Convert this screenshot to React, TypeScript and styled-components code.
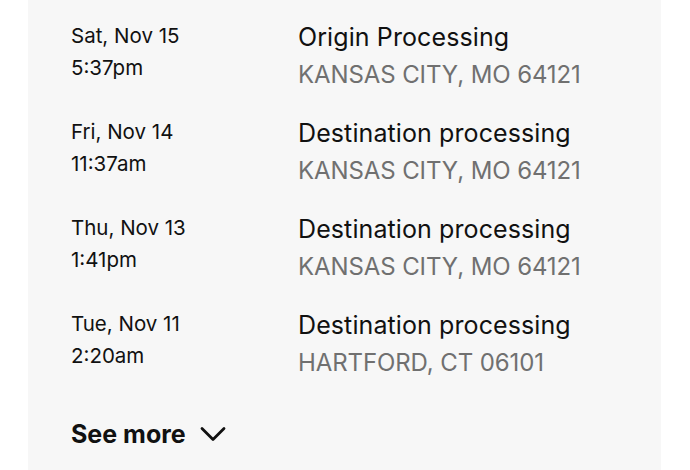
import React from "react";
import styled, { createGlobalStyle } from "styled-components";

const GlobalStyle = createGlobalStyle`
  html, body {
    margin: 0;
    padding: 0;
    background: #fff;
  }
  body {
    font-family: Inter, "Liberation Sans", Arial, sans-serif;
    color: #111;
  }
`;

const Page = styled.div`
  width: 690px;
  height: 470px;
  overflow: hidden;
  padding: 0 29px 0 28px;
  box-sizing: border-box;
`;

const Panel = styled.section`
  background: #f7f7f7;
  height: 100%;
  padding: 19px 0 0 43px;
  box-sizing: border-box;
`;

const List = styled.ul`
  list-style: none;
  margin: 0;
  padding: 0;
  display: flex;
  flex-direction: column;
  gap: 22px;
`;

const Row = styled.li`
  display: grid;
  grid-template-columns: 227px 1fr;
`;

const When = styled.div`
  font-size: 20.5px;
  line-height: 32px;
  padding-top: 1px;
`;

const Event = styled.div`
  line-height: 37px;
`;

const Title = styled.div`
  font-size: 25px;
  letter-spacing: 0.1px;
`;

const Place = styled.div`
  font-size: 24px;
  letter-spacing: -0.1px;
  color: #707070;
`;

const SeeMore = styled.button`
  margin-top: 38px;
  padding: 0;
  border: 0;
  background: none;
  display: flex;
  align-items: center;
  gap: 14px;
  font-family: inherit;
  font-size: 25px;
  font-weight: 700;
  line-height: 30px;
  color: #111;
  cursor: pointer;
`;

const events = [
  { day: "Sat, Nov 15", time: "5:37pm", title: "Origin Processing", place: "KANSAS CITY, MO 64121" },
  { day: "Fri, Nov 14", time: "11:37am", title: "Destination processing", place: "KANSAS CITY, MO 64121" },
  { day: "Thu, Nov 13", time: "1:41pm", title: "Destination processing", place: "KANSAS CITY, MO 64121" },
  { day: "Tue, Nov 11", time: "2:20am", title: "Destination processing", place: "HARTFORD, CT 06101" }
];

const Chevron = () => (
  <svg width="26" height="16" viewBox="0 0 26 16" fill="none">
    <path d="M2 2.5 L13 13.5 L24 2.5" stroke="#111" strokeWidth="2.8" strokeLinecap="round" strokeLinejoin="round" />
  </svg>
);

const App: React.FC = () => (
  <>
    <GlobalStyle />
    <Page>
      <Panel>
        <List>
          {events.map(({ day, time, title, place }) => (
            <Row key={day}>
              <When>
                <div>{day}</div>
                <div>{time}</div>
              </When>
              <Event>
                <Title>{title}</Title>
                <Place>{place}</Place>
              </Event>
            </Row>
          ))}
        </List>
        <SeeMore>
          See more
          <Chevron />
        </SeeMore>
      </Panel>
    </Page>
  </>
);

export default App;
